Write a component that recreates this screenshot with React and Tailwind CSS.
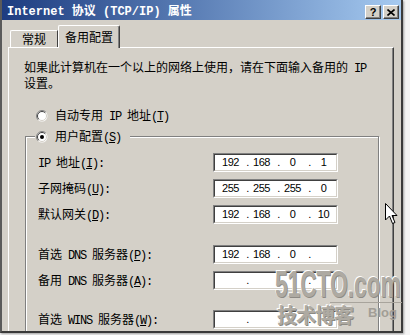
import React from "react";

const ASCII = /^[\x20-\x7e]+$/;

// SimSun draws latin at half width, so squeeze the mono runs to 6px per char
const mixed = (s) =>
  s
    .split(/([\x20-\x7e]+)/)
    .filter(Boolean)
    .map((part, i) =>
      ASCII.test(part) ? (
        <span key={i} className="font-['Liberation_Mono',monospace] tracking-[-1.2px]">
          {part}
        </span>
      ) : (
        <span key={i}>{part}</span>
      )
    );

const Label = ({ text, hot, colon = false }) => (
  <span className="whitespace-nowrap">
    {mixed(text)}
    <span className="font-['Liberation_Mono',monospace] tracking-[-1.2px]">
      (<span className="underline">{hot}</span>){colon ? ":" : ""}
    </span>
  </span>
);

const Radio = ({ checked = false }) => (
  <svg width="12" height="12" viewBox="0 0 12 12" className="shrink-0">
    <circle cx="6" cy="6" r="5.5" fill="#fff" />
    <path d="M2.1 9.9 A5.5 5.5 0 0 1 9.9 2.1" stroke="#808080" strokeWidth="1" fill="none" />
    <path d="M2.8 9.2 A4.5 4.5 0 0 1 9.2 2.8" stroke="#404040" strokeWidth="1" fill="none" />
    <path d="M9.2 2.8 A4.5 4.5 0 0 1 2.8 9.2" stroke="#d4d0c8" strokeWidth="1" fill="none" />
    {checked && <circle cx="6" cy="6" r="2" fill="#000" />}
  </svg>
);

const IpBox = ({ parts }) => (
  <div className="w-[125px] h-[19px] border-t border-l border-b border-r border-t-[#808080] border-l-[#808080] border-b-white border-r-white">
    <div className="h-full flex items-center pl-[3px] bg-white border-t border-l border-b border-r border-t-[#404040] border-l-[#404040] border-b-[#d4d0c8] border-r-[#d4d0c8] font-['Liberation_Sans',sans-serif] text-[11px] tracking-[-0.4px] text-black leading-none">
      {parts.map((p, i) => (
        <React.Fragment key={i}>
          {i > 0 && <span className="w-[6px] text-right">.</span>}
          <span className="w-[25px] text-center">{p}</span>
        </React.Fragment>
      ))}
    </div>
  </div>
);

const rows = [
  { text: "IP 地址", hot: "I", parts: ["192", "168", "0", "1"], mt: "mt-0" },
  { text: "子网掩码", hot: "U", parts: ["255", "255", "255", "0"], mt: "mt-[7px]" },
  { text: "默认网关", hot: "D", parts: ["192", "168", "0", "10"], mt: "mt-[7px]" },
  { text: "首选 DNS 服务器", hot: "P", parts: ["192", "168", "0", ""], mt: "mt-[21px]" },
  { text: "备用 DNS 服务器", hot: "A", parts: ["", "", "", ""], mt: "mt-[7px]" },
  { text: "首选 WINS 服务器", hot: "W", parts: ["", "", "", ""], mt: "mt-[20px]" },
];

const TitleButton = ({ children }) => (
  <div className="w-[16px] h-[14px] bg-[#d4d0c8] border-t border-l border-t-white border-l-white border-b border-r border-b-[#404040] border-r-[#404040] shadow-[inset_-1px_-1px_0_#808080] flex items-center justify-center">
    {children}
  </div>
);

export default function App() {
  return (
    <div className="relative w-[410px] h-[335px] bg-[#f4f4f4] overflow-hidden font-['Noto_Sans_CJK_SC',sans-serif] text-[12px] text-black">
      <div className="w-[403px] h-[333px] flex flex-col overflow-hidden bg-[#d4d0c8] border-l-2 border-r-2 border-b-2 border-l-[#5a5a5a] border-r-[#3a3a3a] border-b-[#3a3a3a] shadow-[1px_1px_2px_rgba(0,0,0,0.35)]">
        {/* title bar */}
        <div className="h-[20px] shrink-0 flex items-center pt-[4px] pl-[5px] pr-[2px] bg-gradient-to-r from-[#1e3c80] to-[#a6caf0]">
          <div className="flex-1 font-['Liberation_Mono','Noto_Sans_CJK_SC',monospace] font-bold text-[12px] leading-none text-white whitespace-nowrap">
            Internet 协议 (TCP/IP) 属性
          </div>
          <div className="flex gap-[2px]">
            <TitleButton>
              <span className="font-['Liberation_Sans',sans-serif] font-bold text-[11px] leading-none">?</span>
            </TitleButton>
            <TitleButton>
              <svg width="8" height="7" viewBox="0 0 8 7">
                <path d="M0.5 0.5 L7.5 6.5 M7.5 0.5 L0.5 6.5" stroke="#000" strokeWidth="1.6" />
              </svg>
            </TitleButton>
          </div>
        </div>

        {/* body */}
        <div className="flex-1 flex flex-col pl-[6px]">
          <div className="h-[27px] shrink-0 flex items-end pl-[2px]">
            <div className="w-[48px] h-[17px] flex items-center justify-center pb-px border-t border-l border-r border-t-white border-l-white border-r-[#404040] rounded-tl-[2px] leading-[13px]">
              常规
            </div>
            <div className="relative z-10 -mb-px w-[62px] h-[23px] flex items-center justify-center pb-[2px] bg-[#d4d0c8] border-t border-l border-r border-t-white border-l-white border-r-[#404040] shadow-[inset_-1px_0_0_#808080] rounded-tl-[2px] rounded-tr-[2px] leading-[13px]">
              备用配置
            </div>
          </div>

          <div className="w-[386px] flex-1 border-t border-l border-r border-t-white border-l-white border-r-[#404040] shadow-[inset_-1px_0_0_#808080]">
            <p className="pt-[12px] pl-[15px] leading-[13px] whitespace-nowrap">
              {mixed("如果此计算机在一个以上的网络上使用，请在下面输入备用的 IP")}
              <br />
              设置。
            </p>

            <div className="mt-[20px] pl-[27px] h-[13px] flex items-center gap-[7px] leading-[13px]">
              <Radio />
              <Label text="自动专用 IP 地址" hot="T" />
            </div>

            <fieldset className="mt-[8px] ml-[16px] w-[354px] pb-[20px] border border-[#808080] shadow-[inset_1px_1px_0_#fff,1px_1px_0_#fff]">
              <legend className="ml-[9px] pl-px pr-[9px] bg-[#d4d0c8]">
                <span className="h-[13px] flex items-center gap-[7px] leading-[13px]">
                  <Radio checked />
                  <Label text="用户配置" hot="S" />
                </span>
              </legend>
              <div className="pt-[10px] pl-[12px]">
                {rows.map((r) => (
                  <div key={r.text} className={`${r.mt} h-[19px] flex items-center leading-[13px]`}>
                    <div className="w-[175px]">
                      <Label text={r.text} hot={r.hot} colon />
                    </div>
                    <IpBox parts={r.parts} />
                  </div>
                ))}
              </div>
            </fieldset>
          </div>
        </div>
      </div>

      {/* mouse pointer over the dialog */}
      <svg className="absolute left-[385px] top-[203px]" width="13" height="22" viewBox="0 0 13 22">
        <path d="M0.5 0.5 L0.5 17 L4.5 13 L7.5 20.5 L10 19.5 L7 12.5 L12 12.5 Z" fill="#fff" stroke="#000" strokeWidth="1" strokeLinejoin="round" />
      </svg>

      {/* blog watermark */}
      <div className="absolute left-[275px] top-[267px] pointer-events-none select-none">
        <div className="origin-left scale-x-[0.63] font-['Liberation_Sans',sans-serif] font-bold text-[36px] leading-none text-[#aeaaa2] whitespace-nowrap [text-shadow:1px_1px_0_#8d8a84,-1px_-1px_0_#ffffff]">
          51CTO.com
        </div>
      </div>
      <div className="absolute left-[330px] top-[302px] w-[72px] h-px bg-[#a8a49c]" />
      <div className="absolute left-[277px] top-[305px] pointer-events-none select-none font-['Noto_Sans_CJK_SC',sans-serif] font-bold text-[20px] leading-none text-[#aeaaa2] tracking-[-1px] [text-shadow:1px_1px_0_#8d8a84,-1px_-1px_0_#ffffff]">
        技术博客
      </div>
      <div className="absolute left-[368px] top-[306px] pointer-events-none select-none font-['Liberation_Sans',sans-serif] font-bold text-[13px] leading-none text-[#a29e96]">
        Blog
      </div>
    </div>
  );
}
